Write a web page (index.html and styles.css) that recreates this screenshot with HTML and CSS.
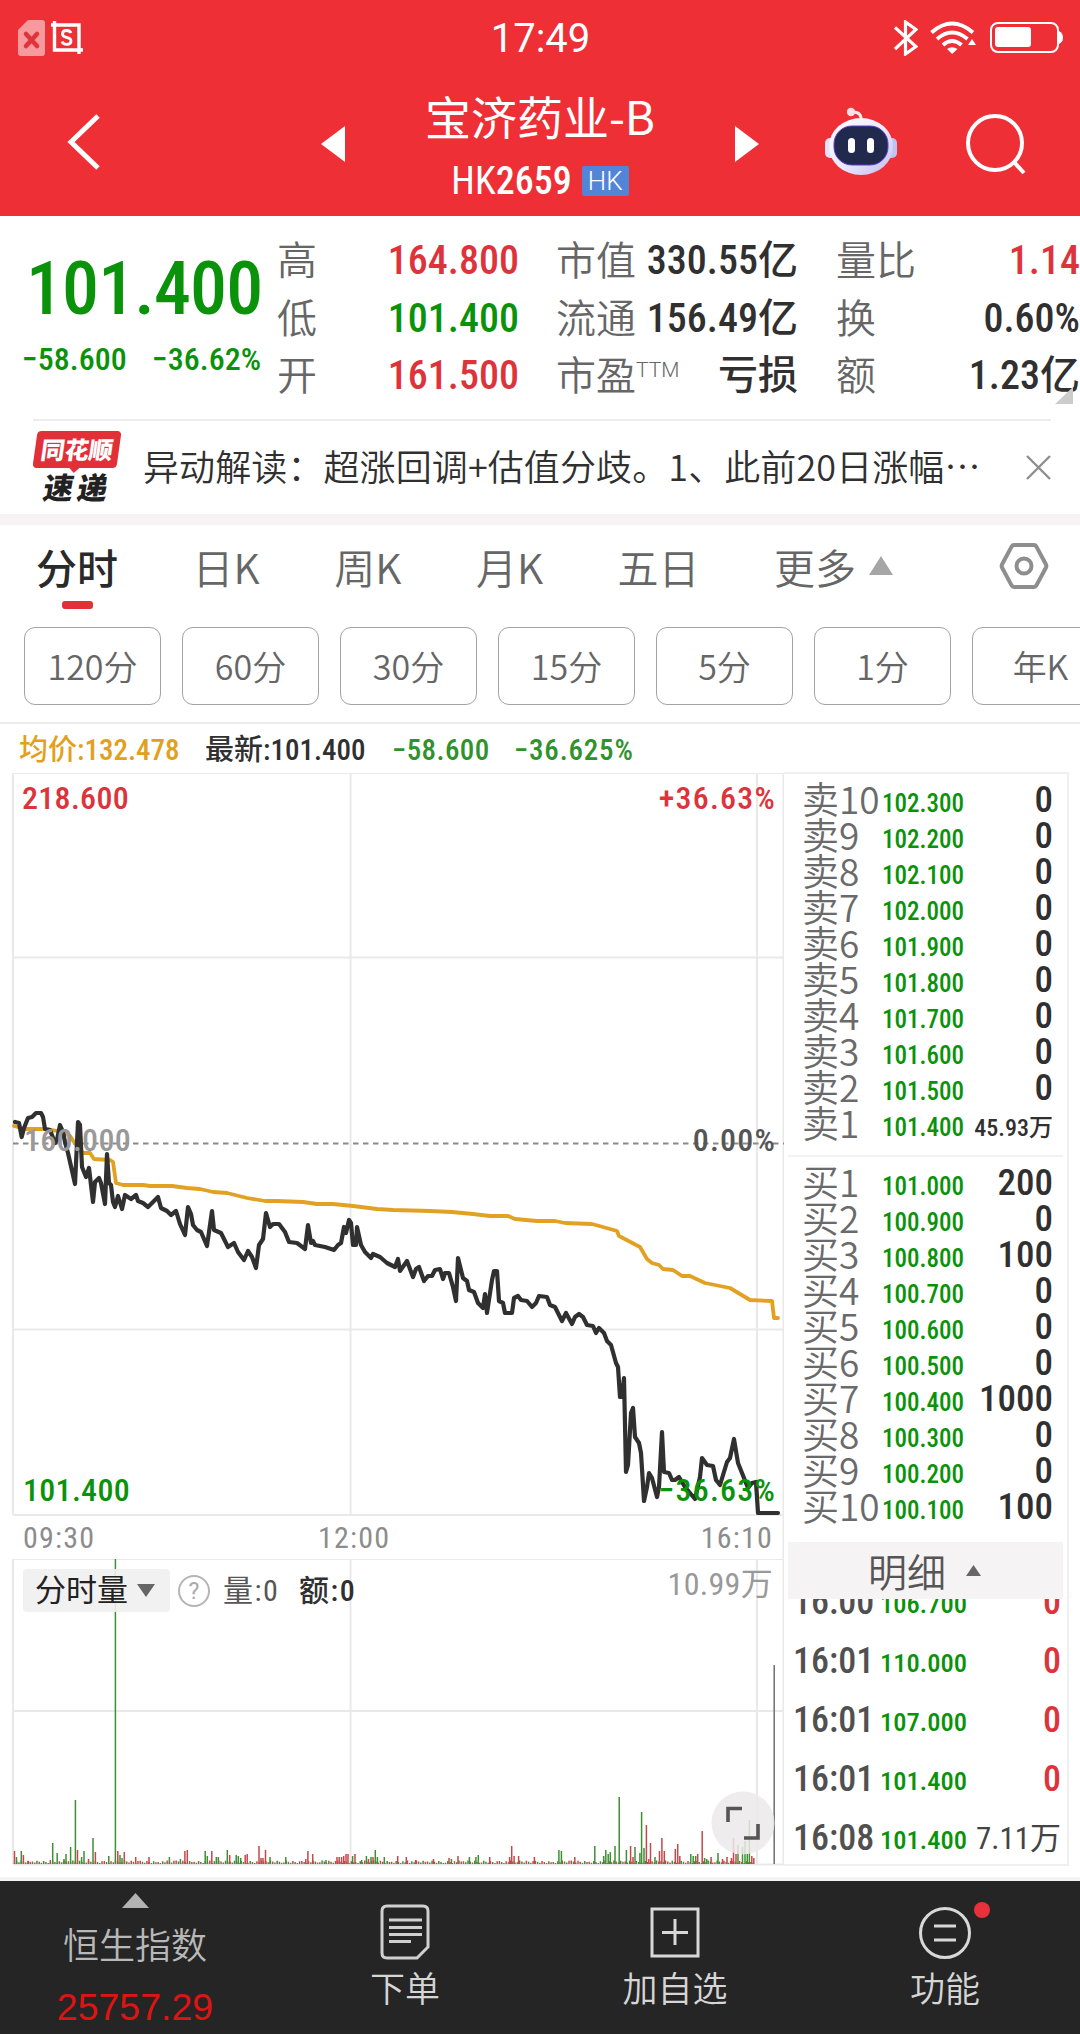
FILE: index.html
```html
<!DOCTYPE html>
<html lang="zh-CN">
  <head>
    <meta charset="UTF-8" />
    <meta name="viewport" content="width=device-width, initial-scale=1.0" />
    <title>宝济药业-B HK2659</title>
    <link rel="stylesheet" href="styles.css">
  </head>
  <body>
    <header class="header">
      <!-- Status bar -->
      <div class="status-bar">
        <div class="status-left">
          <svg width="27" height="36" viewBox="0 0 27 36">
            <path d="M10 0H24Q27 0 27 3V33Q27 36 24 36H3Q0 36 0 33V10Z" fill="#f79a9d" />
            <path d="M8 14L19 26M19 14L8 26" stroke="#e0333a" stroke-width="4.5" stroke-linecap="round" />
          </svg>
          <svg width="32" height="33" viewBox="0 0 32 33" fill="none" stroke="#fff" stroke-width="3.4">
            <path d="M0 4H28V33M3.5 0V29H32" />
            <path d="M20 12Q19 9.5 15.5 9.5Q11.5 9.5 11.5 13Q11.5 15.5 15.5 16.3Q20 17.2 20 20Q20 23.3 15.8 23.3Q12 23.3 11 20.5" stroke-width="2.8" />
          </svg>
        </div>
        <div class="status-time">17:49</div>
        <div class="status-right">
          <svg width="24" height="36" viewBox="0 0 24 36" fill="none" stroke="#fff" stroke-width="3.2">
            <path d="M1 7.500L22 26.500L11.500 34V2L22 9.500L1 29" />
          </svg>
          <svg class="wifi" width="46" height="34" viewBox="0 0 46 34" fill="none" stroke="#fff" stroke-width="3.8">
            <path d="M1.500 11.500Q22 -6.500 43 11.500M7 18Q22 5 37.500 18M13 24Q22 16 31.500 24" />
            <path d="M17 28Q22 24.500 27.500 28L22.200 33Z" fill="#fff" stroke="none" />
            <path d="M42 18L46 24H38Z" fill="#fff" stroke="none" />
          </svg>
          <svg width="73" height="31" viewBox="0 0 73 31">
            <rect x="1" y="1" width="67" height="29" rx="7" fill="none" stroke="#fff" stroke-width="2" />
            <rect x="5" y="5" width="36" height="20" rx="3" fill="#fff" />
            <path d="M69 9Q73 11 73 15.500Q73 20 69 22Z" fill="#fff" />
          </svg>
        </div>
      </div>

      <!-- Title bar -->
      <div class="title-bar">
        <svg class="back" width="34" height="58" viewBox="0 0 34 58" fill="none" stroke="#fff" stroke-width="5">
          <path d="M31 3L4 29L31 55" />
        </svg>
        <svg class="prev" width="24" height="36" viewBox="0 0 24 36"><path d="M24 0V36L0 18Z" fill="#fff" /></svg>
        <div class="title">
          <h1 class="stock-name">宝济药业-B</h1>
          <div class="stock-code"><span class="code-prefix">HK</span>2659<span class="market">HK</span></div>
        </div>
        <svg class="next" width="24" height="36" viewBox="0 0 24 36"><path d="M0 0V36L24 18Z" fill="#fff" /></svg>
        <svg class="robot" width="72" height="68" viewBox="0 0 72 68">
          <defs>
            <linearGradient id="shell" x1="0" y1="0" x2="1" y2="1">
              <stop offset="0" stop-color="#ffffff" />
              <stop offset="0.55" stop-color="#e9e8fb" />
              <stop offset="1" stop-color="#c3b9ee" />
            </linearGradient>
          </defs>
          <path d="M36 14Q37 5 28 5" fill="none" stroke="#fde9ee" stroke-width="3" />
          <circle cx="26" cy="5" r="4.200" fill="#fbdfe6" />
          <rect x="0" y="31" width="12" height="20" rx="5" fill="#e3e2f8" />
          <rect x="60" y="31" width="12" height="20" rx="5" fill="#bfc3f2" />
          <ellipse cx="36" cy="39.500" rx="32" ry="28.500" fill="url(#shell)" />
          <rect x="9" y="19" width="54" height="39" rx="18" fill="#212a4d" stroke="#5a3fd0" stroke-width="1" />
          <rect x="23" y="31" width="7" height="15" rx="3.500" fill="#fff" />
          <rect x="42" y="31" width="7" height="15" rx="3.500" fill="#fff" />
        </svg>
        <svg class="search" width="62" height="62" viewBox="0 0 62 62" fill="none" stroke="#fff" stroke-width="4">
          <ellipse cx="29" cy="30" rx="27" ry="27" />
          <path d="M47 48L58 60" />
        </svg>
      </div>
    </header>

    <!-- Quote -->
    <section class="quote">
      <div class="price-box">
        <div class="price">101.400</div>
        <div class="change"><span>−58.600</span><span>−36.62%</span></div>
      </div>
      <dl class="stats stats-a">
        <dt>高</dt><dd class="red">164.800</dd>
        <dt>低</dt><dd class="green">101.400</dd>
        <dt>开</dt><dd class="red">161.500</dd>
      </dl>
      <dl class="stats stats-b">
        <dt>市值</dt><dd>330.55亿</dd>
        <dt>流通</dt><dd>156.49亿</dd>
        <dt>市盈<sup>TTM</sup></dt><dd>亏损</dd>
      </dl>
      <dl class="stats stats-c">
        <dt>量比</dt><dd class="red">1.14</dd>
        <dt>换</dt><dd>0.60%</dd>
        <dt>额</dt><dd>1.23亿</dd>
      </dl>
      <svg class="corner" width="18" height="17" viewBox="0 0 18 17"><path d="M18 0V17H0Z" fill="#ccc" /></svg>
    </section>

    <!-- News banner -->
    <section class="banner">
      <div class="logo">
        <span class="logo-top">同花顺</span>
        <span class="logo-bottom">速递</span>
      </div>
      <p class="banner-text">异动解读：超涨回调+估值分歧。1、此前20日涨幅<span class="dots">⋯</span></p>
      <svg width="25" height="25" viewBox="0 0 25 25" fill="none" stroke="#8f8f8f" stroke-width="2.400">
        <path d="M1 1L24 24M24 1L1 24" />
      </svg>
    </section>

    <!-- Tabs -->
    <nav class="tabs">
      <span class="tab active">分时</span>
      <span class="tab">日K</span>
      <span class="tab">周K</span>
      <span class="tab">月K</span>
      <span class="tab">五日</span>
      <span class="tab more">更多<svg width="24" height="19" viewBox="0 0 24 19"><path d="M12 0L24 19H0Z" fill="#a6a6a6" /></svg></span>
      <svg class="settings" width="50" height="48" viewBox="0 0 50 48" fill="none" stroke="#8e8e8e" stroke-width="4">
        <path d="M15 3H35Q36.500 3 37.300 4.400L47 22.500Q47.700 24 47 25.500L37.300 43.600Q36.500 45 35 45H15Q13.500 45 12.700 43.600L3 25.500Q2.300 24 3 22.500L12.700 4.400Q13.500 3 15 3Z" />
        <circle cx="25" cy="24" r="7.500" />
      </svg>
    </nav>

    <div class="periods">
      <span class="period">120分</span>
      <span class="period">60分</span>
      <span class="period">30分</span>
      <span class="period">15分</span>
      <span class="period">5分</span>
      <span class="period">1分</span>
      <span class="period">年K</span>
    </div>

    <div class="legend">
      <span class="avg">均价:132.478</span>
      <span class="last">最新:101.400</span>
      <span class="diff">−58.600</span>
      <span class="pct">−36.625%</span>
    </div>

    <main class="board">
      <div class="charts">
        <!-- Price chart -->
        <svg class="price-chart" width="784" height="786" viewBox="0 0 784 786">
          <path class="grid" d="M13 0H784M13 184.500H784M13 556.500H784M13 742H784M13 0V742M350.500 0V742M757 0V742M783.500 0V786" />
          <path class="zero" d="M13 370.500H784" />
          <polyline class="avg-line" points="14,353 25,356 47,356 62,359 70,363 74,369 78,374 83,380 90,380 94,386 110,387 113,389 116,410 123,412 143,412 150,413 172,413 187,415 200,416 213,419 227,420 247,425 265,428 277,428 303,429 317,431 333,431 353,433 377,436 393,437 430,438 452,439 473,441 490,443 508,443 515,446 537,448 555,448 565,450 592,451 603,454 617,458 619,463 640,474 647,486 652,490 659,492 663,496 673,497 682,503 690,503 705,510 730,515 750,527 772,528 774,545 778,545" />
          <polyline class="price-line" points="15,349 19,350 21.700,364 24,355 28,345 32,344 36,340 41,340 43,344 45,356 50,357 55,370 57,367 60,352 63,359 65,369 68,380 75,411 78,349 80,352 82,394 86,404 89,395 93,429 95,409 99,405 101,410 105,431 107,381 109,410 111,412 113,429 115,434 118,423 122,436 125,422 131,426 136,422 138,428 143,430 148,434 152,430 158,424 161,435 167,438 171,442 176,438 180,451 185,462 188,434 191,441 193,452 197,457 201,459 207,473 212,438 214,457 221,460 228,474 234,470 238,479 244,487 248,478 252,484 256,495 259,472 263,466 266,440 270,454 273,451 279,451 285,459 289,469 297,470 305,476 308,452 311,470 313,468 315,472 325,474 334,477 338,472 341,470 344,454 346,460 349,447 351,450 353,472 356,472 357,454 361,472 365,479 371,485 373,481 380,484 387,490 395,494 398,486 400,498 407,488 413,504 416,496 419,494 424,508 428,503 432,503 435,497 440,496 443,506 445,500 449,500 453,514 456,528 458,485 463,505 467,508 469,517 474,519 478,530 483,535 485,521 487,540 492,507 494,498 497,498 499,528 503,530 505,540 512,540 514,525 518,523 521,527 527,528 532,534 536,530 539,523 547,524 550,532 555,534 562,548 566,540 572,551 575,544 579,541 583,544 587,552 593,553 596,560 599,555 604,560 607,568 611,572 616,590 618,594 620,624 622,624 624,605 626,699 628,692 631,640 633,635 635,664 639,670 641,680 644,728 647,714 649,700 652,705 657,724 659,714 662,659 664,699 669,700 672,707 675,707 679,704 685,714 695,726 700,704 702,685 707,692 713,693 716,707 720,712 727,689 730,685 734,666 738,690 742,700 748,715 752,710 756,709 758,740 778,740" />
          <text class="label red" x="22" y="36">218.600</text>
          <text class="label pct-label red end" x="776" y="36">+36.63%</text>
          <text class="label gray mid" x="24" y="378">160.000</text>
          <text class="label pct-label dark end" x="776" y="378">0.00%</text>
          <text class="label green" x="23" y="728">101.400</text>
          <text class="label pct-label green end" x="776" y="728">−36.63%</text>
          <text class="time" x="23" y="775">09:30</text>
          <text class="time" x="318" y="775">12:00</text>
          <text class="time end" x="773" y="775">16:10</text>
        </svg>

        <!-- Volume chart -->
        <div class="volume">
          <svg width="784" height="308" viewBox="0 0 784 308">
            <path class="grid" d="M13 0H784M13 152H784M13 305.500H784M13 0V305M350.500 0V305M757 0V305M783.500 0V305" />
            <g id="bars"></g>
            <path d="M774.200 106V305" stroke="#777" stroke-width="1.600" />
            <text class="label gray end" x="773" y="36">10.99万</text>
          </svg>
          <div class="volume-head">
            <span class="volume-type">分时量<svg width="18" height="13" viewBox="0 0 18 13"><path d="M0 0H18L9 13Z" fill="#666" /></svg></span>
            <span class="help">?</span>
            <span class="vol">量:0</span>
            <span class="amt">额:0</span>
          </div>
          <svg class="expand" width="64" height="64" viewBox="0 0 64 64">
            <circle cx="32" cy="32" r="31.500" fill="#ebe9ea" fill-opacity="0.850" />
            <path d="M17 31V17.500H31M47 33V47H33" fill="none" stroke="#555" stroke-width="3.600" />
          </svg>
        </div>
      </div>

      <!-- Order book -->
      <aside class="book">
        <div class="orders sells">
          <div class="order"><span class="lv">卖10</span><span class="pr">102.300</span><span class="qt">0</span></div>
          <div class="order"><span class="lv">卖9</span><span class="pr">102.200</span><span class="qt">0</span></div>
          <div class="order"><span class="lv">卖8</span><span class="pr">102.100</span><span class="qt">0</span></div>
          <div class="order"><span class="lv">卖7</span><span class="pr">102.000</span><span class="qt">0</span></div>
          <div class="order"><span class="lv">卖6</span><span class="pr">101.900</span><span class="qt">0</span></div>
          <div class="order"><span class="lv">卖5</span><span class="pr">101.800</span><span class="qt">0</span></div>
          <div class="order"><span class="lv">卖4</span><span class="pr">101.700</span><span class="qt">0</span></div>
          <div class="order"><span class="lv">卖3</span><span class="pr">101.600</span><span class="qt">0</span></div>
          <div class="order"><span class="lv">卖2</span><span class="pr">101.500</span><span class="qt">0</span></div>
          <div class="order"><span class="lv">卖1</span><span class="pr">101.400</span><span class="qt small">45.93万</span></div>
        </div>
        <div class="orders buys">
          <div class="order"><span class="lv">买1</span><span class="pr">101.000</span><span class="qt">200</span></div>
          <div class="order"><span class="lv">买2</span><span class="pr">100.900</span><span class="qt">0</span></div>
          <div class="order"><span class="lv">买3</span><span class="pr">100.800</span><span class="qt">100</span></div>
          <div class="order"><span class="lv">买4</span><span class="pr">100.700</span><span class="qt">0</span></div>
          <div class="order"><span class="lv">买5</span><span class="pr">100.600</span><span class="qt">0</span></div>
          <div class="order"><span class="lv">买6</span><span class="pr">100.500</span><span class="qt">0</span></div>
          <div class="order"><span class="lv">买7</span><span class="pr">100.400</span><span class="qt">1000</span></div>
          <div class="order"><span class="lv">买8</span><span class="pr">100.300</span><span class="qt">0</span></div>
          <div class="order"><span class="lv">买9</span><span class="pr">100.200</span><span class="qt">0</span></div>
          <div class="order"><span class="lv">买10</span><span class="pr">100.100</span><span class="qt">100</span></div>
        </div>
        <div class="detail-head">明细<svg width="15" height="11" viewBox="0 0 15 11"><path d="M7.500 0L15 11H0Z" fill="#666" /></svg></div>
        <div class="trades">
          <div class="trade"><span class="tm">16:00</span><span class="pr">106.700</span><span class="qt red">0</span></div>
          <div class="trade"><span class="tm">16:01</span><span class="pr">110.000</span><span class="qt red">0</span></div>
          <div class="trade"><span class="tm">16:01</span><span class="pr">107.000</span><span class="qt red">0</span></div>
          <div class="trade"><span class="tm">16:01</span><span class="pr">101.400</span><span class="qt red">0</span></div>
          <div class="trade"><span class="tm">16:08</span><span class="pr">101.400</span><span class="qt mid">7.11万</span></div>
        </div>
      </aside>
    </main>

    <!-- Bottom bar -->
    <footer class="bottom-bar">
      <div class="index">
        <svg width="27" height="15" viewBox="0 0 27 15"><path d="M13.500 0L27 15H0Z" fill="#b3b3b3" /></svg>
        <span class="index-name">恒生指数</span>
        <span class="index-value">25757.29</span>
      </div>
      <div class="action">
        <svg width="50" height="56" viewBox="0 0 50 56" fill="none" stroke="#d0d0d0" stroke-width="3">
          <path d="M7 2H43Q48 2 48 7V43L37 54H7Q2 54 2 49V7Q2 2 7 2Z" />
          <path d="M9 16H42M9 23.500H42M9 30.500H42M9 37.500H31" />
        </svg>
        <span>下单</span>
      </div>
      <div class="action">
        <svg width="50" height="56" viewBox="0 0 50 56" fill="none" stroke="#d8d8d8" stroke-width="3">
          <path d="M2 5H48V52H2ZM25 15V41M12 28.500H38" />
        </svg>
        <span>加自选</span>
      </div>
      <div class="action">
        <svg width="54" height="56" viewBox="0 0 54 56" fill="none" stroke="#d8d8d8" stroke-width="3">
          <circle cx="27" cy="29" r="24.500" />
          <path d="M16 22H38M16 36H38" />
        </svg>
        <span>功能</span>
        <i class="dot"></i>
      </div>
    </footer>

    <script>
      // Volume bars: [x, height]
      const down = [[16.5,7],[21.300,13],[52.700,21],[57.200,11],[64,5],[66,10],[70.600,17],[75.400,64],[81.600,7],[84,13],[93,26],[108.800,8],[115.400,305],[120,9],[122,6],[169.400,7],[180.400,5],[205.200,13],[207.300,8],[216.300,7],[218.300,7],[227.300,14],[236.200,9],[238.300,8],[240.700,6],[270,7],[285.800,7],[326,4],[352.600,8],[361.600,4],[366.400,8],[371,7],[375.300,14],[377.400,7],[384.300,7],[451.400,5],[469.400,7],[475.900,7],[478.300,9],[558.900,14],[561.400,13],[594.800,18],[603.700,8],[605.800,14],[608.200,10],[610.300,12],[615,18],[619.200,67],[626.400,14],[635,17],[639.900,11],[641.600,52],[644,16],[655,7],[690.800,10],[693.200,8],[695.700,8],[704.600,6],[706.700,5],[718,11],[738,19],[742.500,17],[745,23],[747.300,10],[749.400,44]];
      const up = [[14.500,13],[23.400,9],[28.200,3],[50.300,4],[77.500,14],[88.500,5],[95.400,12],[117.800,13],[124.300,12],[135.700,7],[149,7],[184.900,13],[187.300,14],[211.800,13],[229.700,9],[245.200,9],[247.200,10],[259,18],[261,6],[263,6],[265.500,14],[305.800,5],[307.900,13],[312.700,10],[337,7],[339.200,7],[341.600,7],[343.700,8],[346,10],[348,10],[355,10],[368.500,5],[373,7],[397.700,8],[406.300,7],[415.600,4],[433.500,5],[449,6],[458,8],[489.700,7],[509.600,7],[511.700,18],[514.100,8],[518.600,8],[534.400,7],[574.800,7],[630.600,18],[633,7],[646.400,39],[648.800,5],[650.500,21],[659.500,13],[661.900,26],[664.300,13],[675.300,15],[677.700,20],[679.800,8],[697.700,10],[702.200,33],[711.100,7],[722.500,5],[727,7],[731.500,6],[733.500,26],[736,10],[751.800,8],[753.800,6]];
      const bars = document.getElementById("bars");

      function draw(x, h, color) {
        const line = document.createElementNS("http://www.w3.org/2000/svg", "path");
        line.setAttribute("d", "M" + x + " 305v-" + h);
        line.setAttribute("class", "bar " + color);
        bars.appendChild(line);
      }

      // quiet minutes
      for (let i = 0; i < 330; i++) {
        const h = 1 + ((i * 7 + (i >> 3) * 5) % 11) / 4;
        draw(14.5 + i * 2.245, h, (i * 5 + (i >> 2)) % 7 < 3 ? "up" : "down");
      }
      down.forEach(([x, h]) => draw(x, h, "down"));
      up.forEach(([x, h]) => draw(x, h, "up"));
    </script>
  </body>
</html>
```
FILE: styles.css
```css
* {
  box-sizing: border-box;
}

body {
  margin: 0;
  width: 1080px;
  height: 2034px;
  overflow: hidden;
  background: #fff;
  color: #303030;
  font-family: "Noto Sans CJK SC", sans-serif;
  display: flex;
  flex-direction: column;
}

svg {
  display: block;
  flex-shrink: 0;
}

.red {
  color: #dd333a;
  fill: #dd333a;
}

.green {
  color: #0a930a;
  fill: #0a930a;
}

/* Header */
.header {
  height: 216px;
  background: #ee2f35;
  color: #fff;
}

.status-bar {
  height: 72px;
  padding: 0 17px 0 18px;
  display: grid;
  grid-template-columns: 1fr auto 1fr;
  align-items: center;
}

.status-left,
.status-right {
  display: flex;
  align-items: center;
  gap: 6px;
}

.status-right {
  justify-content: flex-end;
  gap: 12px;
}

.status-right .wifi {
  margin-right: 2px;
}

.status-time {
  font: 400 40px/72px Roboto, sans-serif;
  padding-top: 3px;
}

.title-bar {
  height: 144px;
  display: flex;
  align-items: flex-start;
}

.back {
  margin: 41px 0 0 67px;
}

.prev {
  margin: 54px 0 0 220px;
}

.title {
  width: 390px;
  text-align: center;
}

.stock-name {
  margin: 13px 0 0;
  font-size: 46px;
  font-weight: 400;
  line-height: 60px;
}

.stock-code {
  display: flex;
  justify-content: center;
  align-items: center;
  margin-top: 16px;
  font: 500 38px/40px "Roboto Condensed", sans-serif;
}

.code-prefix {
  font-weight: 400;
}

.market {
  width: 47px;
  height: 30px;
  margin-left: 10px;
  border-radius: 2px;
  background: #5285d8;
  font: 300 26px/30px Roboto, sans-serif;
}

.next {
  margin-top: 54px;
}

.robot {
  margin: 35px 0 0 66px;
}

.search {
  margin: 41px 0 0 69px;
}

/* Quote */
.quote {
  position: relative;
  height: 203px;
  display: flex;
  padding-top: 14px;
}

.price-box {
  width: 277px;
  padding-top: 22px;
  color: #0a930a;
  font-family: "Roboto Condensed", sans-serif;
  font-weight: 500;
}

.price {
  padding-left: 26px;
  font-size: 74px;
  line-height: 74px;
  letter-spacing: -0.900px;
}

.change {
  display: flex;
  justify-content: space-between;
  padding: 13px 16px 0 22px;
  font-size: 32px;
  line-height: 40px;
}

.stats {
  display: grid;
  grid-template-columns: 80px 1fr;
  grid-auto-rows: 57.500px;
  margin: 0;
  line-height: 57px;
}

.stats-a {
  width: 242px;
}

.stats-b {
  width: 242px;
  margin-left: 37px;
}

.stats-c {
  width: 244px;
  margin-left: 38px;
}

.stats dt {
  height: 57px;
  font-size: 40px;
  font-weight: 350;
  color: #666;
  white-space: nowrap;
}

.stats dd {
  margin: 0;
  padding-top: 2px;
  text-align: right;
  font-family: "Roboto Condensed", "Noto Sans CJK SC", sans-serif;
  font-size: 40px;
  font-weight: 500;
  white-space: nowrap;
}

.stats sup {
  font: 300 21px/20px Roboto, sans-serif;
  vertical-align: 13px;
}

.corner {
  position: absolute;
  right: 7px;
  top: 171px;
}

/* Banner */
.banner {
  display: flex;
  align-items: center;
  height: 95px;
  margin: 0 29px 0 33px;
  border-top: 2px solid #ececec;
}

.logo {
  position: relative;
  width: 88px;
  height: 74px;
  display: flex;
  flex-direction: column;
  align-items: center;
}

.logo-top {
  width: 84px;
  height: 37px;
  transform: skewX(-8deg);
  border-radius: 4px;
  background: #e23038;
  color: #fff;
  font-size: 24px;
  font-weight: 900;
  line-height: 35px;
  text-align: center;
}

.logo-top::after {
  content: "";
  position: absolute;
  left: 36px;
  top: 36px;
  border: 6px solid transparent;
  border-top-color: #e23038;
  border-bottom: 0;
}

.logo-bottom {
  transform: skewX(-10deg);
  font-size: 30px;
  font-weight: 900;
  line-height: 36px;
  letter-spacing: 4px;
  padding-left: 2px;
  color: #222;
}

.banner-text {
  flex: 1;
  margin: -6px 0 0 22px;
  font-size: 36px;
  font-weight: 350;
  line-height: 60px;
  letter-spacing: 0.100px;
  white-space: nowrap;
}

.dots {
  display: inline-block;
  width: 36px;
}

/* Tabs */
.tabs {
  display: flex;
  align-items: center;
  height: 98px;
  padding: 0 31px 6px 36px;
  border-top: 11px solid #f7f3f4;
  font-size: 41px;
  font-weight: 350;
  color: #666;
}

.tab {
  position: relative;
  line-height: 60px;
  margin-right: 74.500px;
}

.tab.active {
  font-weight: 500;
  color: #2a2a2a;
}

.tab.active::after {
  content: "";
  position: absolute;
  left: 26px;
  bottom: -13px;
  width: 31px;
  height: 8px;
  border-radius: 3px;
  background: #e23038;
}

.more {
  display: flex;
  align-items: center;
  gap: 13px;
  margin-right: auto;
}

.periods {
  display: flex;
  gap: 21px;
  height: 112px;
  padding: 15px 0 0 24px;
  border-bottom: 2px solid #ececec;
}

.period {
  flex: 0 0 137px;
  height: 78px;
  border: 1.500px solid #a3a3a3;
  border-radius: 11px;
  font-size: 34px;
  font-weight: 350;
  line-height: 75px;
  text-align: center;
  color: #666;
}

.legend {
  display: flex;
  height: 49px;
  padding-left: 19px;
  font: 500 29px/53px "Roboto Condensed", "Noto Sans CJK SC", sans-serif;
}

.legend .avg {
  width: 186px;
  color: #e2a01c;
}

.legend .last {
  width: 187px;
}

.legend .diff {
  width: 122px;
  letter-spacing: 0.400px;
  color: #2f922a;
}

.legend .pct {
  letter-spacing: 0.800px;
  color: #2f922a;
}

/* Board */
.board {
  display: flex;
  flex: 1;
  border-bottom: 4px solid #f4f4f4;
}

.charts {
  width: 784px;
}

.grid {
  fill: none;
  stroke: #e9e9e9;
  stroke-width: 2;
}

.zero {
  stroke: #8a8a8a;
  stroke-width: 2;
  stroke-dasharray: 5.500 4.500;
}

.avg-line,
.price-line {
  fill: none;
  stroke: #e2a122;
  stroke-width: 3.800;
  stroke-linejoin: round;
  stroke-linecap: round;
}

.price-line {
  stroke: #303030;
  stroke-width: 4.200;
}

.label,
.time {
  font-family: "Roboto Condensed", "Noto Sans CJK SC", sans-serif;
  font-size: 32px;
  font-weight: 500;
  letter-spacing: 0.300px;
}

.pct-label {
  letter-spacing: 1.200px;
}

.time {
  font-size: 30px;
  letter-spacing: 1.200px;
  font-weight: 400;
  fill: #8c8c8c;
}

.label.gray {
  font-weight: 400;
  fill: #999;
}

.label.gray.mid {
  font-weight: 500;
}

.label.dark {
  fill: #555;
}

.end {
  text-anchor: end;
}

.volume {
  position: relative;
}

.bar {
  stroke-width: 1.500;
}

.bar.up {
  stroke: #c5474a;
}

.bar.down {
  stroke: #3d8f33;
}

.volume-head {
  position: absolute;
  left: 23px;
  top: 10px;
  display: flex;
  align-items: center;
  font: 400 30px/42px "Roboto Condensed", "Noto Sans CJK SC", sans-serif;
}

.volume-type {
  display: flex;
  align-items: center;
  gap: 9px;
  width: 147px;
  height: 43px;
  padding-left: 12px;
  border-radius: 4px;
  background: rgba(240, 240, 240, 0.900);
  font-size: 31px;
  color: #222;
}

.help {
  width: 32px;
  height: 32px;
  margin: 0 13px 0 8px;
  border: 2px solid #b5b5b5;
  border-radius: 50%;
  font: 400 23px/29px Roboto, sans-serif;
  text-align: center;
  color: #aaa;
}

.vol {
  width: 76px;
  letter-spacing: 1.500px;
  color: #555;
}

.amt {
  letter-spacing: 1.500px;
  font-weight: 500;
}

.expand {
  position: absolute;
  left: 711px;
  top: 232px;
}

/* Order book */
.book {
  width: 285px;
  height: 1094px;
  margin-top: -1px;
  padding: 0 4px;
  border: 2px solid #efefef;
  border-left: 0;
  overflow: hidden;
}

.orders {
  height: 381px;
  padding-top: 8px;
}

.buys {
  height: 387px;
  border-top: 2px solid #f2f2f2;
}

.order {
  display: grid;
  grid-template-columns: 78px 91px 1fr;
  height: 36px;
  padding: 0 10px 0 14px;
  line-height: 36px;
  white-space: nowrap;
}

.lv {
  margin-top: -2px;
  font-size: 37px;
  font-weight: 350;
  line-height: 36px;
  color: #6a6a6a;
}

.pr {
  padding: 4px 0 0 2px;
  font: 500 25px/36px "Roboto Condensed", sans-serif;
  color: #0a930a;
}

.qt {
  font: 500 37px/36px "Roboto Condensed", "Noto Sans CJK SC", sans-serif;
  text-align: right;
}

.qt.small {
  font-size: 24px;
  line-height: 44px;
}

.detail-head {
  display: flex;
  justify-content: center;
  align-items: center;
  gap: 20px;
  height: 57px;
  padding-right: 2px;
  background: #f5f3f4;
  font-size: 39px;
  font-weight: 350;
  line-height: 57px;
  color: #555;
}

.trades {
  height: 265px;
  display: flex;
  flex-direction: column;
  justify-content: flex-end;
  overflow: hidden;
}

.trade {
  display: grid;
  flex-shrink: 0;
  grid-template-columns: 85px 93px 1fr;
  height: 59px;
  padding: 0 2px 0 5px;
  line-height: 59px;
  white-space: nowrap;
}

.trade:last-child {
  margin-bottom: -4px;
}

.tm {
  font: 500 36px/59px "Roboto Condensed", sans-serif;
  color: #505050;
}

.trade .pr {
  font-size: 26.500px;
  line-height: 59px;
  padding-top: 1px;
}

.trade .qt {
  font-size: 36px;
  line-height: 59px;
}

.trade .mid {
  font-size: 31px;
  font-weight: 400;
  color: #444;
}

/* Bottom bar */
.bottom-bar {
  display: grid;
  grid-template-columns: repeat(4, 1fr);
  height: 153px;
  background: #252525;
  color: #d6d6d6;
}

.index,
.action {
  position: relative;
  display: flex;
  flex-direction: column;
  align-items: center;
}

.index {
  padding-top: 12px;
}

.index-name {
  margin-top: 10px;
  font-size: 36px;
  font-weight: 350;
  line-height: 50px;
  color: #b8b8b8;
}

.index-value {
  margin-top: 15px;
  font: 400 37.500px/48px "Liberation Sans", sans-serif;
  color: #dd1414;
}

.action {
  padding-top: 23px;
  font-size: 35px;
  font-weight: 350;
  line-height: 50px;
}

.action span {
  margin-top: 2px;
}

.dot {
  position: absolute;
  left: 164px;
  top: 21px;
  width: 16px;
  height: 16px;
  border-radius: 50%;
  background: #e8313a;
}
```
